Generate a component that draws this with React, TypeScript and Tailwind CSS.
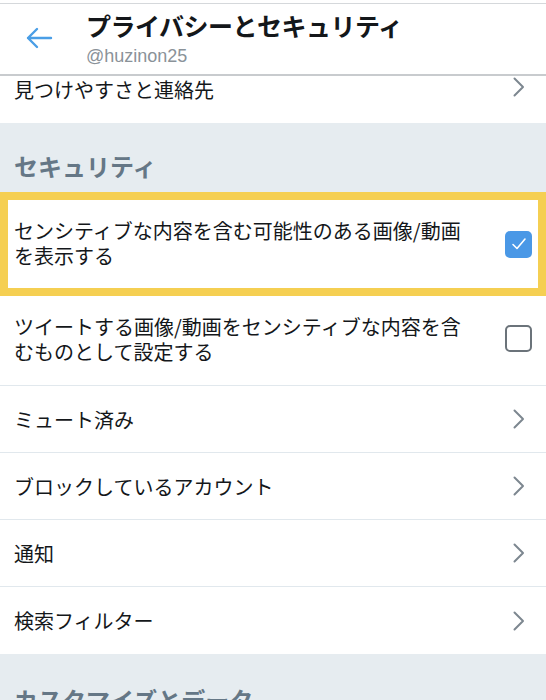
import React from "react";

const font = { fontFamily: '"Noto Sans CJK JP", "Noto Sans", sans-serif' };

function Chevron() {
  return (
    <svg width="14" height="22" viewBox="0 0 14 22" className="shrink-0">
      <path d="M2.5 2.5 L11 11 L2.5 19.5" fill="none" stroke="#7d8790" strokeWidth="2" strokeLinecap="round" strokeLinejoin="round" />
    </svg>
  );
}

function NavRow({ label, last }: { label: string; last?: boolean }) {
  return (
    <div className={`flex h-[67px] items-center justify-between pl-[14px] pr-[20px] bg-white ${last ? "" : "border-b border-[#e1e8ed]"}`}>
      <span className="text-[20px] leading-[25px] text-[#14171a]">{label}</span>
      <Chevron />
    </div>
  );
}

export default function App() {
  return (
    <div className="w-[546px] h-[700px] overflow-hidden bg-white" style={font}>
      <div className="h-[4px] bg-white border-b border-[#d5d8db]" />
      <div className="flex h-[72px] items-center border-b-2 border-[#c8cbce] bg-white">
        <div className="w-[86px] flex justify-start pl-[24px] -mt-[2px]">
          <svg width="30" height="24" viewBox="0 0 30 24">
            <path d="M27 12 H4 M13 3 L4 12 L13 21" fill="none" stroke="#4a9ee6" strokeWidth="2.4" strokeLinecap="round" strokeLinejoin="round" />
          </svg>
        </div>
        <div className="flex flex-col -mt-[3px]">
          <span className="text-[25px] leading-[32px] font-bold text-[#14171a] tracking-[-0.5px]">プライバシーとセキュリティ</span>
          <span className="text-[18px] leading-[22px] mt-[4px] text-[#8a9299]" style={{ fontFamily: '"Liberation Sans", Arial, sans-serif' }}>@huzinon25</span>
        </div>
      </div>
      <div className="flex h-[47px] items-start justify-between pl-[14px] pr-[20px] bg-white">
        <span className="text-[20px] leading-[28px] text-[#14171a]">見つけやすさと連絡先</span>
        <Chevron />
      </div>
      <div className="h-[69px] bg-[#e6ecf0] flex items-end pl-[14px] pb-[10px]">
        <span className="text-[24px] leading-[32px] font-bold text-[#657786]">セキュリティ</span>
      </div>
      <div className="h-[104px] border-[8px] border-[#f5cf52] bg-white flex items-center justify-between pl-[6px] pr-[6px]">
        <div className="flex flex-col text-[20px] leading-[25px] text-[#14171a] -mt-[2px]">
          <span>センシティブな内容を含む可能性のある画像/動画</span>
          <span>を表示する</span>
        </div>
        <div className="w-[27px] h-[27px] rounded-[5px] bg-[#4a98e6] flex items-center justify-center">
          <svg width="18" height="16" viewBox="0 0 18 16">
            <path d="M3 8.5 L7 12.5 L15 3" fill="none" stroke="white" strokeWidth="1.6" strokeLinecap="round" strokeLinejoin="round" />
          </svg>
        </div>
      </div>
      <div className="h-[90px] flex items-center justify-between pl-[14px] pr-[14px] border-b border-[#e1e8ed] bg-white">
        <div className="flex flex-col text-[20px] leading-[25px] text-[#14171a] -mt-[4px]">
          <span>ツイートする画像/動画をセンシティブな内容を含</span>
          <span>むものとして設定する</span>
        </div>
        <div className="w-[27px] h-[27px] rounded-[5px] border-[2.5px] border-[#6b737a] bg-white -mt-[4px]" />
      </div>
      <NavRow label="ミュート済み" />
      <NavRow label="ブロックしているアカウント" />
      <NavRow label="通知" />
      <NavRow label="検索フィルター" last />
      <div className="h-[80px] bg-[#e6ecf0] pl-[14px] pt-[30px]">
        <span className="text-[24px] leading-[32px] font-bold text-[#657786]">カスタマイズとデータ</span>
      </div>
    </div>
  );
}
